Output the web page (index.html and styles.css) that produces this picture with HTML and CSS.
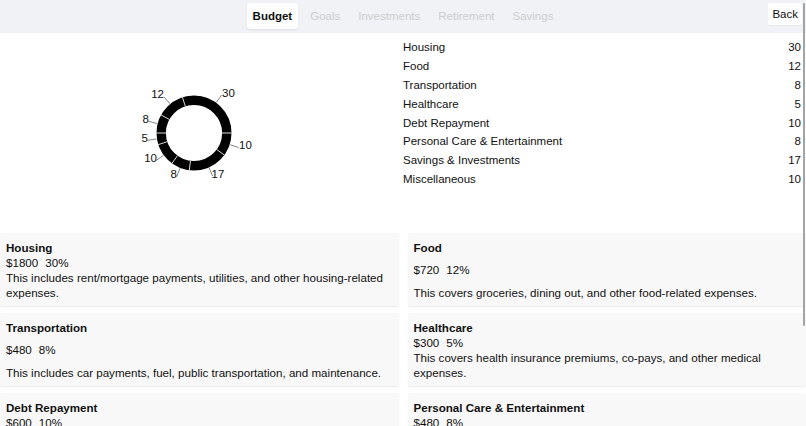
FILE: index.html
```html
<!DOCTYPE html>
<html lang="en">
<head>
<meta charset="utf-8">
<title>Budget</title>
<link rel="stylesheet" href="styles.css">
</head>
<body>
<header class="topbar">
  <div class="spacer"></div>
  <nav class="tabs">
    <span class="tab active">Budget</span>
    <span class="tab">Goals</span>
    <span class="tab">Investments</span>
    <span class="tab">Retirement</span>
    <span class="tab">Savings</span>
  </nav>
  <div class="actions"><button class="back">Back</button></div>
</header>

<section class="overview">
  <div class="chart">
    <svg width="388" height="200" viewBox="-194 -100 388 200">
      <circle cx="0" cy="0" r="32.8" fill="none" stroke="#000" stroke-width="9.4"/>
      <g stroke="#d8d8d8" stroke-width="1">
        <line x1="-8.65" y1="-26.63" x2="-11.9" y2="-36.6"/>
        <line x1="28" y1="0" x2="38.2" y2="0"/>
        <line x1="22.65" y1="16.46" x2="30.9" y2="22.45"/>
        <line x1="-3.51" y1="27.78" x2="-4.8" y2="37.9"/>
        <line x1="-16.46" y1="22.65" x2="-22.45" y2="30.9"/>
        <line x1="-26.63" y1="8.65" x2="-36.3" y2="11.8"/>
        <line x1="-28" y1="0" x2="-38.2" y2="0"/>
        <line x1="-24.54" y1="-13.49" x2="-33.45" y2="-18.4"/>
      </g>
      <g stroke="#666" stroke-width="0.8">
        <line x1="22.34" y1="-30.74" x2="27.63" y2="-38.02"/>
        <line x1="36.14" y1="11.74" x2="44.7" y2="14.52"/>
        <line x1="15.09" y1="34.88" x2="18.66" y2="43.14"/>
        <line x1="-13.99" y1="35.33" x2="-17.3" y2="43.7"/>
        <line x1="-30.74" y1="22.34" x2="-38.02" y2="27.63"/>
        <line x1="-37.53" y1="5.94" x2="-46.42" y2="7.35"/>
        <line x1="-36.81" y1="-9.45" x2="-45.52" y2="-11.69"/>
        <line x1="-24.22" y1="-29.28" x2="-29.96" y2="-36.21"/>
      </g>
      <g class="labels">
        <text x="28" y="-36" text-anchor="start">30</text>
        <text x="45" y="16" text-anchor="start">10</text>
        <text x="17.5" y="45" text-anchor="start">17</text>
        <text x="-17" y="45" text-anchor="end">8</text>
        <text x="-37" y="29" text-anchor="end">10</text>
        <text x="-46" y="9" text-anchor="end">5</text>
        <text x="-45" y="-10" text-anchor="end">8</text>
        <text x="-30" y="-35" text-anchor="end">12</text>
      </g>
    </svg>
  </div>
  <ul class="legend">
    <li><span>Housing</span><span>30</span></li>
    <li><span>Food</span><span>12</span></li>
    <li><span>Transportation</span><span>8</span></li>
    <li><span>Healthcare</span><span>5</span></li>
    <li><span>Debt Repayment</span><span>10</span></li>
    <li><span>Personal Care &amp; Entertainment</span><span>8</span></li>
    <li><span>Savings &amp; Investments</span><span>17</span></li>
    <li><span>Miscellaneous</span><span>10</span></li>
  </ul>
</section>

<section class="cards">
  <article class="card">
    <h3 class="card-title">Housing</h3>
    <div class="amount"><span>$1800</span><span>30%</span></div>
    <p class="desc">This includes rent/mortgage payments, utilities, and other housing-related expenses.</p>
  </article>
  <article class="card">
    <h3 class="card-title">Food</h3>
    <div class="amount"><span>$720</span><span>12%</span></div>
    <p class="desc">This covers groceries, dining out, and other food-related expenses.</p>
  </article>
  <article class="card">
    <h3 class="card-title">Transportation</h3>
    <div class="amount"><span>$480</span><span>8%</span></div>
    <p class="desc">This includes car payments, fuel, public transportation, and maintenance.</p>
  </article>
  <article class="card">
    <h3 class="card-title">Healthcare</h3>
    <div class="amount"><span>$300</span><span>5%</span></div>
    <p class="desc">This covers health insurance premiums, co-pays, and other medical expenses.</p>
  </article>
  <article class="card">
    <h3 class="card-title">Debt Repayment</h3>
    <div class="amount"><span>$600</span><span>10%</span></div>
    <p class="desc">This includes credit card payments, student loan payments, and other debt-related expenses.</p>
  </article>
  <article class="card">
    <h3 class="card-title">Personal Care &amp; Entertainment</h3>
    <div class="amount"><span>$480</span><span>8%</span></div>
    <p class="desc">This covers personal care products, haircuts, hobbies, subscriptions, and entertainment expenses.</p>
  </article>
  <article class="card">
    <h3 class="card-title">Savings &amp; Investments</h3>
    <div class="amount"><span>$1020</span><span>17%</span></div>
    <p class="desc">This includes emergency savings, retirement contributions, and other investments.</p>
  </article>
  <article class="card">
    <h3 class="card-title">Miscellaneous</h3>
    <div class="amount"><span>$600</span><span>10%</span></div>
    <p class="desc">This covers gifts, donations, and other unexpected or irregular expenses.</p>
  </article>
</section>

<div class="scroll-thumb"></div>
</body>
</html>
```

FILE: styles.css
```css
html {
  overflow: hidden;
}
body {
  margin: 0;
  font-family: "Liberation Sans", Arial, sans-serif;
  font-size: 11.5px;
  color: #111;
  background: #fff;
}

.topbar {
  display: grid;
  grid-template-columns: 1fr auto 1fr;
  align-items: start;
  height: 33px;
  background: #f0f2f5;
}
.tabs {
  display: flex;
  gap: 7px;
  padding-top: 3px;
}
.tab {
  display: block;
  height: 26px;
  line-height: 27px;
  padding: 0 5.5px;
  color: #cdced0;
  border-radius: 3px;
}
.tab.active {
  background: #fff;
  color: #111;
  font-weight: bold;
  box-shadow: 0 1px 2px rgba(0, 0, 0, 0.08);
}
.actions {
  display: flex;
  justify-content: flex-end;
  padding-top: 3px;
  padding-right: 4px;
}
.back {
  font-family: inherit;
  font-size: 11.5px;
  color: #111;
  background: #fff;
  border: none;
  border-radius: 2px;
  height: 22px;
  padding: 0 4px;
  box-shadow: 0 1px 1px rgba(0, 0, 0, 0.04);
}

.overview {
  display: flex;
  height: 200px;
}
.chart {
  width: 388px;
  flex: none;
}
.chart svg {
  display: block;
}
.labels text {
  font-family: "Liberation Sans", Arial, sans-serif;
  font-size: 11.5px;
  fill: #111;
}
.legend {
  flex: 1;
  list-style: none;
  margin: 0 5px 0 15px;
  padding: 5px 0 0;
}
.legend li {
  display: flex;
  justify-content: space-between;
  height: 18.9px;
  line-height: 18.9px;
}

.cards {
  display: grid;
  grid-template-columns: 1fr 1fr;
  column-gap: 9px;
  row-gap: 7px;
}
.card {
  display: flex;
  flex-direction: column;
  justify-content: space-between;
  background: #f8f8f8;
  border-radius: 2px;
  padding: 6.5px 6px 5.5px;
  box-shadow: 0 1px 1px rgba(0, 0, 0, 0.08);
  font-size: 11.6px;
  line-height: 15.25px;
}
.card-title {
  margin: 0;
  font-size: 11.6px;
  font-weight: bold;
}
.amount {
  display: flex;
  gap: 7px;
}
.desc {
  margin: 0;
}

.scroll-thumb {
  position: fixed;
  top: 3px;
  right: 1px;
  width: 2px;
  height: 323px;
  background: #a4a4a4;
  border-radius: 1px;
}
```
